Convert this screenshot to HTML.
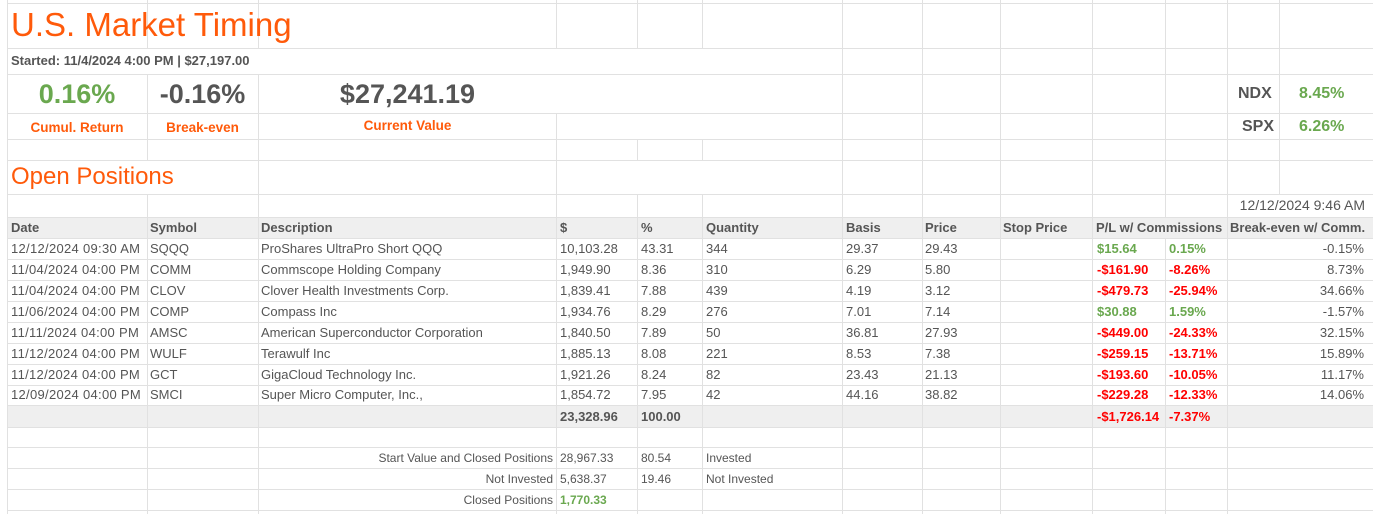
<!DOCTYPE html>
<html><head><meta charset="utf-8"><style>
*{margin:0;padding:0;box-sizing:border-box}
body{width:1373px;height:514px;background:#fff;position:relative;overflow:hidden;font-family:"Liberation Sans",sans-serif;color:#555;font-size:13px}
.v{position:absolute;width:1px;background:#e1e1e1}
.h{position:absolute;height:1px;background:#e1e1e1}
.t{position:absolute;white-space:nowrap;line-height:21px}
.r{text-align:right}
.g{color:#6aa84f}.red{color:#f00}.o{color:#ff5a0a}
.b{font-weight:bold}
.d{letter-spacing:0.3px}
</style></head><body>
<div style="position:absolute;left:7px;top:217px;width:1366px;height:21px;background:#efefef"></div>
<div style="position:absolute;left:7px;top:405px;width:1366px;height:22px;background:#efefef"></div>
<div class="h" style="top:3px;left:7px;width:1366px"></div>
<div class="h" style="top:48px;left:7px;width:1366px"></div>
<div class="h" style="top:74px;left:7px;width:1366px"></div>
<div class="h" style="top:113px;left:7px;width:1366px"></div>
<div class="h" style="top:139px;left:7px;width:1366px"></div>
<div class="h" style="top:160px;left:7px;width:1366px"></div>
<div class="h" style="top:194px;left:7px;width:1366px"></div>
<div class="h" style="top:217px;left:7px;width:1366px"></div>
<div class="h" style="top:238px;left:7px;width:1366px"></div>
<div class="h" style="top:259px;left:7px;width:1366px"></div>
<div class="h" style="top:280px;left:7px;width:1366px"></div>
<div class="h" style="top:301px;left:7px;width:1366px"></div>
<div class="h" style="top:322px;left:7px;width:1366px"></div>
<div class="h" style="top:343px;left:7px;width:1366px"></div>
<div class="h" style="top:364px;left:7px;width:1366px"></div>
<div class="h" style="top:385px;left:7px;width:1366px"></div>
<div class="h" style="top:405px;left:7px;width:1366px"></div>
<div class="h" style="top:427px;left:7px;width:1366px"></div>
<div class="h" style="top:447px;left:7px;width:1366px"></div>
<div class="h" style="top:468px;left:7px;width:1366px"></div>
<div class="h" style="top:489px;left:7px;width:1366px"></div>
<div class="h" style="top:510px;left:7px;width:1366px"></div>
<div class="v" style="left:7px;top:0;height:514px"></div>
<div class="v" style="left:147px;top:0;height:48px"></div>
<div class="v" style="left:147px;top:74px;height:86px"></div>
<div class="v" style="left:147px;top:194px;height:320px"></div>
<div class="v" style="left:258px;top:0;height:48px"></div>
<div class="v" style="left:258px;top:74px;height:440px"></div>
<div class="v" style="left:556px;top:0;height:48px"></div>
<div class="v" style="left:556px;top:113px;height:401px"></div>
<div class="v" style="left:637px;top:0;height:48px"></div>
<div class="v" style="left:637px;top:139px;height:21px"></div>
<div class="v" style="left:637px;top:194px;height:320px"></div>
<div class="v" style="left:702px;top:0;height:48px"></div>
<div class="v" style="left:702px;top:139px;height:21px"></div>
<div class="v" style="left:702px;top:194px;height:320px"></div>
<div class="v" style="left:842px;top:0;height:514px"></div>
<div class="v" style="left:922px;top:0;height:514px"></div>
<div class="v" style="left:1000px;top:0;height:514px"></div>
<div class="v" style="left:1092px;top:0;height:514px"></div>
<div class="v" style="left:1165px;top:0;height:217px"></div>
<div class="v" style="left:1165px;top:238px;height:276px"></div>
<div class="v" style="left:1227px;top:0;height:514px"></div>
<div class="v" style="left:1279px;top:0;height:194px"></div>
<div class="t o" style="left:11px;top:5px;font-size:33px;line-height:40px">U.S. Market Timing</div>
<div class="t b" style="left:11px;top:50px;font-size:13px">Started: 11/4/2024 4:00 PM | $27,197.00</div>
<div class="t b g" style="left:7px;width:140px;text-align:center;top:78px;font-size:27px;line-height:32px">0.16%</div>
<div class="t b" style="left:147px;width:111px;text-align:center;top:78px;font-size:27px;line-height:32px">-0.16%</div>
<div class="t b" style="left:258px;width:299px;text-align:center;top:78px;font-size:27px;line-height:32px">$27,241.19</div>
<div class="t o b" style="left:7px;width:140px;text-align:center;top:117px;font-size:13.5px">Cumul. Return</div>
<div class="t o b" style="left:147px;width:111px;text-align:center;top:117px;font-size:13.5px">Break-even</div>
<div class="t o b" style="left:258px;width:299px;text-align:center;top:115px;font-size:13.5px">Current Value</div>
<div class="t b" style="left:1238px;top:83px;font-size:16px">NDX</div>
<div class="t b g" style="left:1299px;top:83px;font-size:16px">8.45%</div>
<div class="t b" style="left:1242px;top:116px;font-size:16px">SPX</div>
<div class="t b g" style="left:1299px;top:116px;font-size:16px">6.26%</div>
<div class="t o" style="left:11px;top:162px;font-size:24px;line-height:30px">Open Positions</div>
<div class="t r" style="right:8px;top:195px;font-size:14px">12/12/2024 9:46 AM</div>
<div class="t b" style="left:11px;top:217px">Date</div>
<div class="t b" style="left:150px;top:217px">Symbol</div>
<div class="t b" style="left:261px;top:217px">Description</div>
<div class="t b" style="left:560px;top:217px">$</div>
<div class="t b" style="left:641px;top:217px">%</div>
<div class="t b" style="left:706px;top:217px">Quantity</div>
<div class="t b" style="left:846px;top:217px">Basis</div>
<div class="t b" style="left:925px;top:217px">Price</div>
<div class="t b" style="left:1003px;top:217px">Stop Price</div>
<div class="t b" style="left:1096px;top:217px">P/L w/ Commissions</div>
<div class="t b" style="left:1230px;top:217px">Break-even w/ Comm.</div>
<div class="t d" style="left:11px;top:238px">12/12/2024 09:30 AM</div><div class="t" style="left:150px;top:238px">SQQQ</div><div class="t" style="left:261px;top:238px">ProShares UltraPro Short QQQ</div><div class="t" style="left:560px;top:238px">10,103.28</div><div class="t" style="left:641px;top:238px">43.31</div><div class="t" style="left:706px;top:238px">344</div><div class="t" style="left:846px;top:238px">29.37</div><div class="t" style="left:925px;top:238px">29.43</div><div class="t b g" style="left:1097px;top:238px">$15.64</div><div class="t b g" style="left:1169px;top:238px">0.15%</div><div class="t r" style="right:9px;top:238px">-0.15%</div>
<div class="t d" style="left:11px;top:259px">11/04/2024 04:00 PM</div><div class="t" style="left:150px;top:259px">COMM</div><div class="t" style="left:261px;top:259px">Commscope Holding Company</div><div class="t" style="left:560px;top:259px">1,949.90</div><div class="t" style="left:641px;top:259px">8.36</div><div class="t" style="left:706px;top:259px">310</div><div class="t" style="left:846px;top:259px">6.29</div><div class="t" style="left:925px;top:259px">5.80</div><div class="t b red" style="left:1097px;top:259px">-$161.90</div><div class="t b red" style="left:1169px;top:259px">-8.26%</div><div class="t r" style="right:9px;top:259px">8.73%</div>
<div class="t d" style="left:11px;top:280px">11/04/2024 04:00 PM</div><div class="t" style="left:150px;top:280px">CLOV</div><div class="t" style="left:261px;top:280px">Clover Health Investments Corp.</div><div class="t" style="left:560px;top:280px">1,839.41</div><div class="t" style="left:641px;top:280px">7.88</div><div class="t" style="left:706px;top:280px">439</div><div class="t" style="left:846px;top:280px">4.19</div><div class="t" style="left:925px;top:280px">3.12</div><div class="t b red" style="left:1097px;top:280px">-$479.73</div><div class="t b red" style="left:1169px;top:280px">-25.94%</div><div class="t r" style="right:9px;top:280px">34.66%</div>
<div class="t d" style="left:11px;top:301px">11/06/2024 04:00 PM</div><div class="t" style="left:150px;top:301px">COMP</div><div class="t" style="left:261px;top:301px">Compass Inc</div><div class="t" style="left:560px;top:301px">1,934.76</div><div class="t" style="left:641px;top:301px">8.29</div><div class="t" style="left:706px;top:301px">276</div><div class="t" style="left:846px;top:301px">7.01</div><div class="t" style="left:925px;top:301px">7.14</div><div class="t b g" style="left:1097px;top:301px">$30.88</div><div class="t b g" style="left:1169px;top:301px">1.59%</div><div class="t r" style="right:9px;top:301px">-1.57%</div>
<div class="t d" style="left:11px;top:322px">11/11/2024 04:00 PM</div><div class="t" style="left:150px;top:322px">AMSC</div><div class="t" style="left:261px;top:322px">American Superconductor Corporation</div><div class="t" style="left:560px;top:322px">1,840.50</div><div class="t" style="left:641px;top:322px">7.89</div><div class="t" style="left:706px;top:322px">50</div><div class="t" style="left:846px;top:322px">36.81</div><div class="t" style="left:925px;top:322px">27.93</div><div class="t b red" style="left:1097px;top:322px">-$449.00</div><div class="t b red" style="left:1169px;top:322px">-24.33%</div><div class="t r" style="right:9px;top:322px">32.15%</div>
<div class="t d" style="left:11px;top:343px">11/12/2024 04:00 PM</div><div class="t" style="left:150px;top:343px">WULF</div><div class="t" style="left:261px;top:343px">Terawulf Inc</div><div class="t" style="left:560px;top:343px">1,885.13</div><div class="t" style="left:641px;top:343px">8.08</div><div class="t" style="left:706px;top:343px">221</div><div class="t" style="left:846px;top:343px">8.53</div><div class="t" style="left:925px;top:343px">7.38</div><div class="t b red" style="left:1097px;top:343px">-$259.15</div><div class="t b red" style="left:1169px;top:343px">-13.71%</div><div class="t r" style="right:9px;top:343px">15.89%</div>
<div class="t d" style="left:11px;top:364px">11/12/2024 04:00 PM</div><div class="t" style="left:150px;top:364px">GCT</div><div class="t" style="left:261px;top:364px">GigaCloud Technology Inc.</div><div class="t" style="left:560px;top:364px">1,921.26</div><div class="t" style="left:641px;top:364px">8.24</div><div class="t" style="left:706px;top:364px">82</div><div class="t" style="left:846px;top:364px">23.43</div><div class="t" style="left:925px;top:364px">21.13</div><div class="t b red" style="left:1097px;top:364px">-$193.60</div><div class="t b red" style="left:1169px;top:364px">-10.05%</div><div class="t r" style="right:9px;top:364px">11.17%</div>
<div class="t d" style="left:11px;top:384px">12/09/2024 04:00 PM</div><div class="t" style="left:150px;top:384px">SMCI</div><div class="t" style="left:261px;top:384px">Super Micro Computer, Inc.,</div><div class="t" style="left:560px;top:384px">1,854.72</div><div class="t" style="left:641px;top:384px">7.95</div><div class="t" style="left:706px;top:384px">42</div><div class="t" style="left:846px;top:384px">44.16</div><div class="t" style="left:925px;top:384px">38.82</div><div class="t b red" style="left:1097px;top:384px">-$229.28</div><div class="t b red" style="left:1169px;top:384px">-12.33%</div><div class="t r" style="right:9px;top:384px">14.06%</div>
<div class="t b" style="left:560px;top:406px">23,328.96</div><div class="t b" style="left:641px;top:406px">100.00</div><div class="t b red" style="left:1097px;top:406px">-$1,726.14</div><div class="t b red" style="left:1169px;top:406px">-7.37%</div>
<div class="t r" style="right:820px;top:448px;font-size:12px">Start Value and Closed Positions</div><div class="t" style="left:560px;top:448px;font-size:12px">28,967.33</div><div class="t" style="left:641px;top:448px;font-size:12px">80.54</div><div class="t" style="left:706px;top:448px;font-size:12px">Invested</div>
<div class="t r" style="right:820px;top:469px;font-size:12px">Not Invested</div><div class="t" style="left:560px;top:469px;font-size:12px">5,638.37</div><div class="t" style="left:641px;top:469px;font-size:12px">19.46</div><div class="t" style="left:706px;top:469px;font-size:12px">Not Invested</div>
<div class="t r" style="right:820px;top:490px;font-size:12px">Closed Positions</div><div class="t b g" style="left:560px;top:490px;font-size:12px">1,770.33</div>
</body></html>
